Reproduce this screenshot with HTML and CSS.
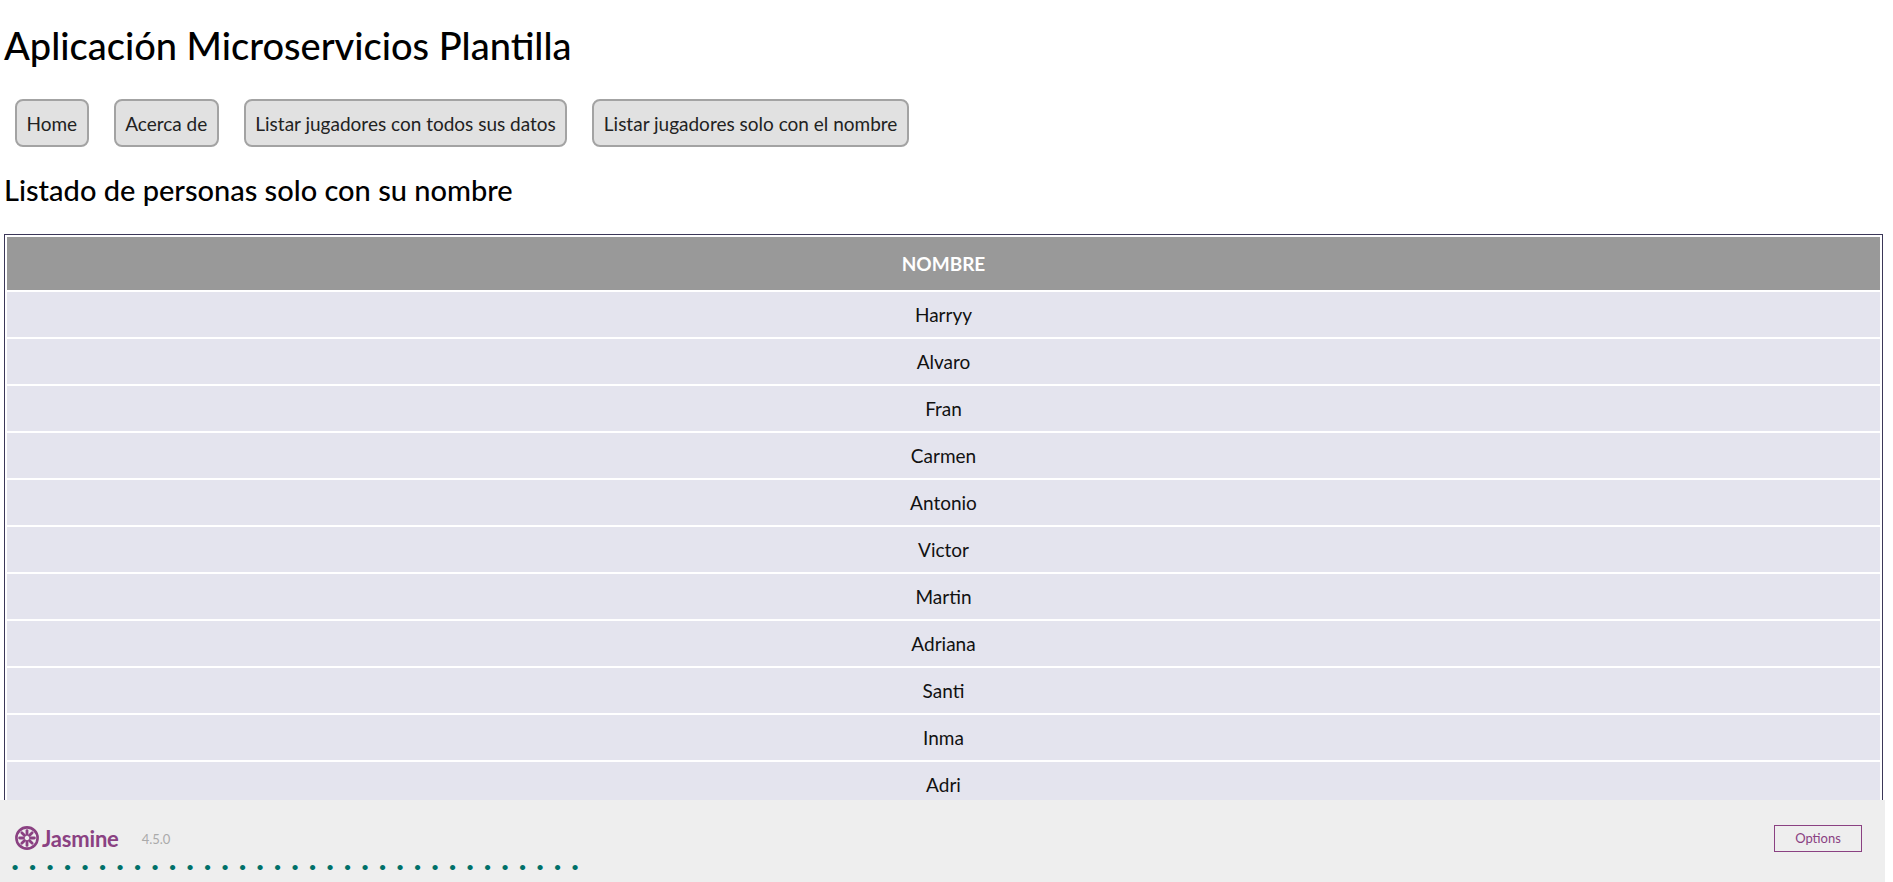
FILE: index.html
```html
<!DOCTYPE html>
<html lang="es">
<head>
<meta charset="utf-8">
<title>Aplicación Microservicios Plantilla</title>
<link rel="stylesheet" href="styles.css">
</head>
<body>
<div class="app">
  <h1 class="title">Aplicación Microservicios Plantilla</h1>
  <nav class="nav">
    <button class="nav-btn">Home</button>
    <button class="nav-btn">Acerca de</button>
    <button class="nav-btn">Listar jugadores con todos sus datos</button>
    <button class="nav-btn">Listar jugadores solo con el nombre</button>
  </nav>
  <h2 class="subtitle">Listado de personas solo con su nombre</h2>
  <table class="players">
    <thead>
      <tr><th>NOMBRE</th></tr>
    </thead>
    <tbody>
      <tr><td>Harryy</td></tr>
      <tr><td>Alvaro</td></tr>
      <tr><td>Fran</td></tr>
      <tr><td>Carmen</td></tr>
      <tr><td>Antonio</td></tr>
      <tr><td>Victor</td></tr>
      <tr><td>Martin</td></tr>
      <tr><td>Adriana</td></tr>
      <tr><td>Santi</td></tr>
      <tr><td>Inma</td></tr>
      <tr><td>Adri</td></tr>
    </tbody>
  </table>
</div>
<div class="jasmine">
  <div class="banner">
    <div class="brand">
      <svg class="logo" width="26" height="26" viewBox="0 0 26 26">
        <circle cx="13" cy="13" r="10.6" fill="none" stroke="#8a4182" stroke-width="2.6"/>
        <g stroke="#8a4182" stroke-width="2.8" stroke-linecap="round">
          <line x1="13" y1="9.6" x2="13" y2="5.6"/>
          <line x1="13" y1="16.4" x2="13" y2="20.4"/>
          <line x1="9.6" y1="13" x2="5.6" y2="13"/>
          <line x1="16.4" y1="13" x2="20.4" y2="13"/>
          <line x1="10.6" y1="10.6" x2="7.8" y2="7.8"/>
          <line x1="15.4" y1="10.6" x2="18.2" y2="7.8"/>
          <line x1="10.6" y1="15.4" x2="7.8" y2="18.2"/>
          <line x1="15.4" y1="15.4" x2="18.2" y2="18.2"/>
        </g>
      </svg>
      <span class="brand-name">Jasmine</span>
      <span class="version">4.5.0</span>
    </div>
    <button class="options">Options</button>
  </div>
  <ul class="summary">
    <li>•</li><li>•</li><li>•</li><li>•</li><li>•</li><li>•</li><li>•</li><li>•</li><li>•</li><li>•</li><li>•</li>
    <li>•</li><li>•</li><li>•</li><li>•</li><li>•</li><li>•</li><li>•</li><li>•</li><li>•</li><li>•</li><li>•</li>
    <li>•</li><li>•</li><li>•</li><li>•</li><li>•</li><li>•</li><li>•</li><li>•</li><li>•</li><li>•</li><li>•</li>
  </ul>
</div>
</body>
</html>
```
FILE: styles.css
```css
html, body {
  margin: 0;
  padding: 0;
  background: #fff;
  overflow: hidden;
}
body {
  font-family: "Lato", "Liberation Sans", sans-serif;
  color: #000;
}
.app {
  height: 800px;
  overflow: hidden;
  padding: 0 10px 0 4px;
}
.title {
  margin: 0;
  padding-top: 21px;
  font-size: 38px;
  line-height: 48px;
  font-weight: 500;
}
.nav {
  display: flex;
  gap: 25px;
  padding-left: 11px;
  margin-top: 30px;
}
.nav-btn {
  font-family: "Lato", "Liberation Sans", sans-serif;
  font-size: 19px;
  color: #222;
  background: #e1e1e1;
  border: 2px solid #a3a3a3;
  border-radius: 8px;
  height: 48px;
  padding: 0 9.5px;
}
.subtitle {
  margin: 25px 0 0;
  font-size: 29px;
  line-height: 36px;
  font-weight: 500;
}
.players {
  margin-top: 26px;
  width: 100%;
  border: 1px solid #3b3758;
  border-spacing: 2px;
}
.players th {
  background: #999;
  color: #fff;
  font-weight: 700;
  font-size: 19px;
  height: 53px;
  padding: 0;
}
.players td {
  background: #e4e4ee;
  text-align: center;
  font-size: 19px;
  color: #111;
  height: 45px;
  padding: 0;
}
.jasmine {
  width: 1885px;
  height: 82px;
  background: #eee;
}
.banner {
  display: flex;
  justify-content: space-between;
  align-items: center;
  height: 24px;
  padding: 26px 23px 0 14px;
}
.brand {
  display: flex;
  align-items: center;
}
.logo {
  display: block;
}
.brand-name {
  font-family: "Lato", sans-serif;
  font-weight: 700;
  font-size: 22px;
  color: #8a4182;
  margin-left: 2px;
  letter-spacing: -0.2px;
}
.version {
  font-family: "Lato", sans-serif;
  font-size: 13px;
  color: #aaa;
  margin-left: 23px;
  margin-top: 2px;
}
.options {
  font-family: "Lato", sans-serif;
  font-size: 13px;
  color: #8a4182;
  background: transparent;
  border: 1px solid #8a4182;
  width: 88px;
  height: 27px;
  padding: 0;
}
.summary {
  list-style: none;
  margin: 9px 0 0;
  padding: 0 0 0 11px;
  display: flex;
  height: 16px;
}
.summary li {
  width: 17.5px;
  font-size: 14px;
  line-height: 16px;
  color: #007069;
}
```
